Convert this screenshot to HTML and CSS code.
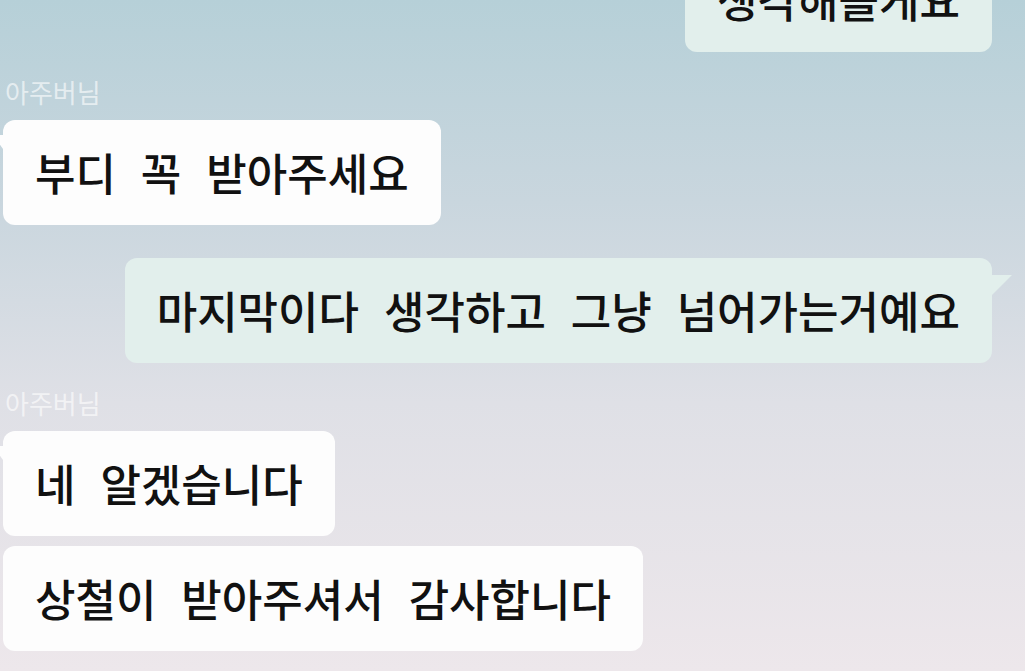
FILE: index.html
```html
<!DOCTYPE html>
<html>
<head>
    <meta charset="UTF-8">
    <meta name="viewport" content="width=device-width, initial-scale=1.0">
    <title>채팅</title>
    <link rel="stylesheet" href="styles.css">
</head>
<body>
    <div class="chat">
        <div class="row row-me">
            <div class="bubble bubble-me">생각해볼게요</div>
        </div>

        <div class="sender">아주버님</div>
        <div class="row">
            <div class="bubble bubble-other tail">부디 꼭 받아주세요</div>
        </div>

        <div class="row row-me row-new">
            <div class="bubble bubble-me tail">마지막이다 생각하고 그냥 넘어가는거예요</div>
        </div>

        <div class="sender">아주버님</div>
        <div class="row">
            <div class="bubble bubble-other tail">네 알겠습니다</div>
        </div>
        <div class="row row-next">
            <div class="bubble bubble-other">상철이 받아주셔서 감사합니다</div>
        </div>
    </div>
</body>
</html>
```

FILE: styles.css
```css
html, body {
    height: 100%;
}
body {
    margin: 0;
    overflow: hidden;
    font-family: "Noto Sans CJK KR", "Noto Sans", sans-serif;
    color: #111;
    background: linear-gradient(to bottom, #b6d0d8 0%, #c9d6de 30%, #dfe0e6 60%, #ede7eb 100%);
}
.chat {
    display: flex;
    flex-direction: column;
    margin-top: -53px;
    padding: 0 33px 0 3px;
}
.row {
    display: flex;
    justify-content: flex-start;
}
.row-me {
    justify-content: flex-end;
}
.row-new {
    margin-top: 33px;
}
.row-next {
    margin-top: 10px;
}
.sender {
    margin: 25px 0 13px 2px;
    font-size: 26px;
    line-height: 30px;
    color: rgba(255, 255, 255, 0.6);
}
.bubble {
    position: relative;
    padding: 24px 32px;
    font-size: 44px;
    font-weight: 500;
    line-height: 57px;
    word-spacing: 15px;
    white-space: nowrap;
    border-radius: 12px;
}
.bubble-other {
    background-color: #fdfdfd;
}
.bubble-me {
    background-color: #e2efec;
}
.bubble-other.tail::before {
    content: "";
    position: absolute;
    left: -10px;
    top: 15px;
    border-top: 14px solid #fdfdfd;
    border-left: 10px solid transparent;
}
.bubble-me.tail::after {
    content: "";
    position: absolute;
    right: -20px;
    top: 17px;
    border-top: 20px solid #e2efec;
    border-right: 20px solid transparent;
}
```
